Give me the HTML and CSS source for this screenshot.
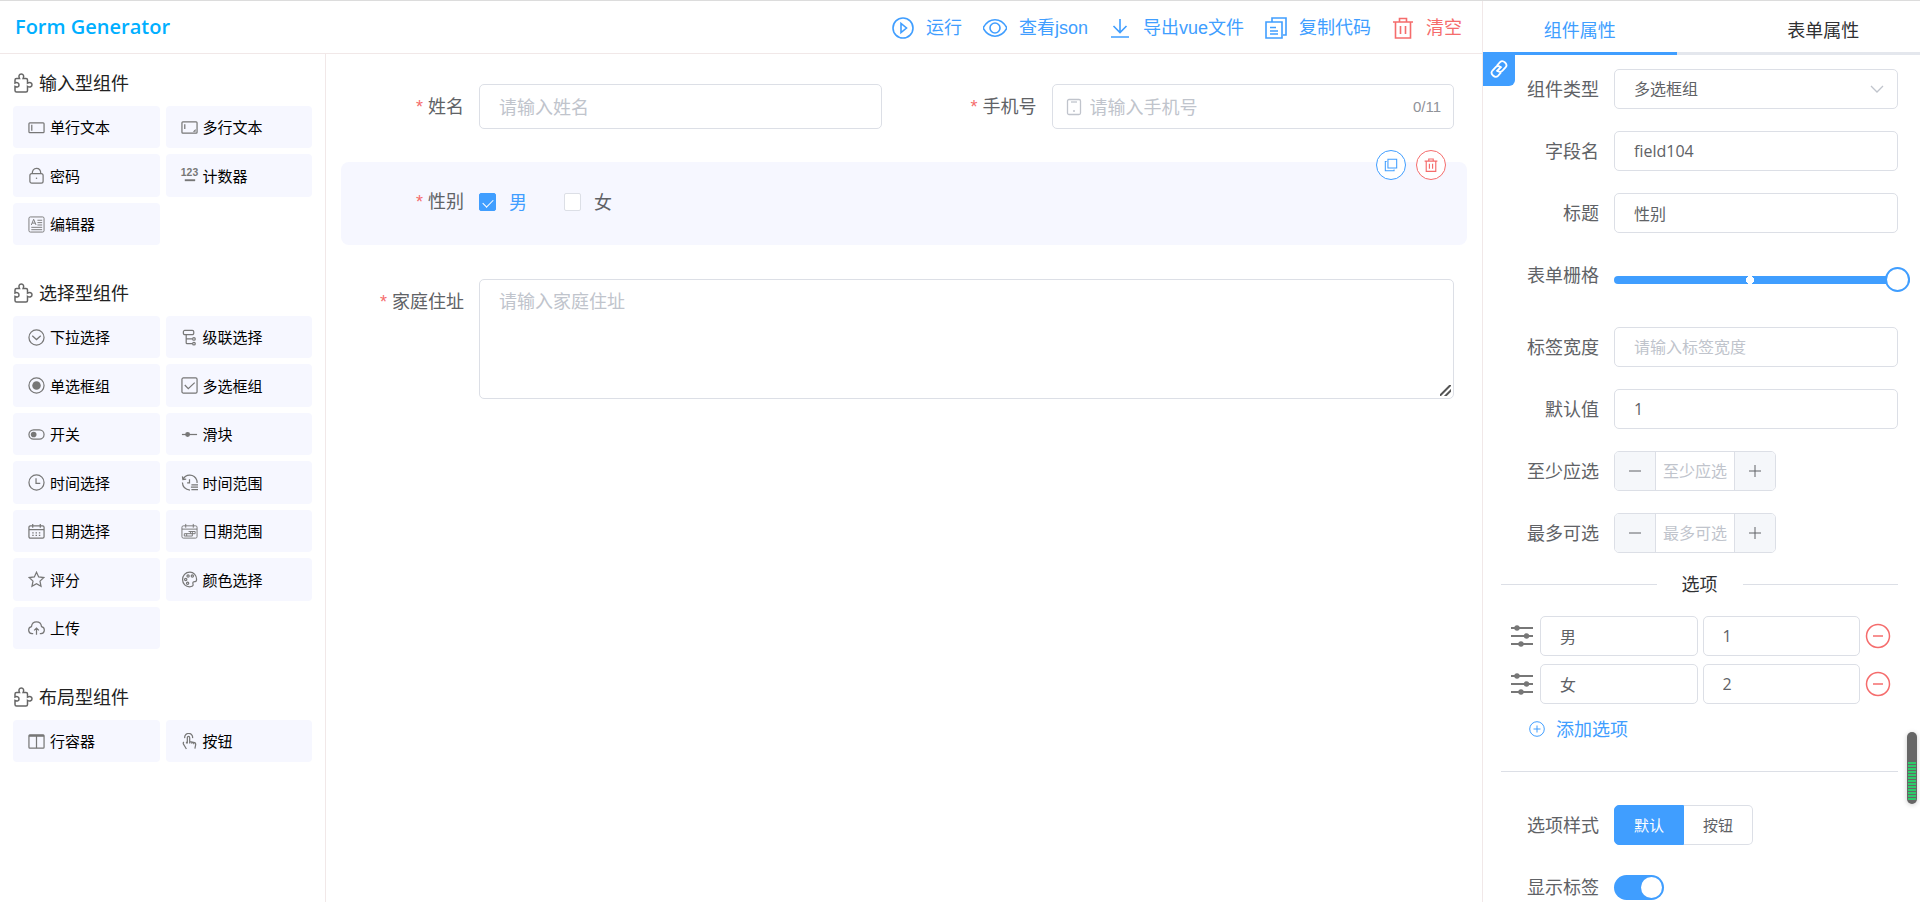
FILE: index.html
```html
<!DOCTYPE html>
<html lang="zh-CN">
<head>
<meta charset="utf-8">
<title>Form Generator</title>
<link rel="stylesheet" href="styles.css">
</head>
<body>
<svg class="sprite" aria-hidden="true">
  <symbol id="puzzle" viewBox="0 0 20 20"><path d="M4 5.500h2.500C5.200 3 6.300 1 8.300 1s3.100 2 1.800 4.500H13A1.500 1.500 0 0 1 14.500 7v3.200c2.500-1.300 4.500-.4 4.500 1.500s-2 2.900-4.500 1.600v4.200a1.500 1.500 0 0 1-1.500 1.500H3.500A1.500 1.500 0 0 1 2 17.500v-4c2.200 1.200 4 .3 4-1.600S4.200 9 2 10V7a1.500 1.500 0 0 1 1.500-1.500z"/></symbol>
  <symbol id="input" viewBox="0 0 18 18"><rect x="1" y="4" width="16" height="10.500" rx="1"/><path d="M4 6v6.500"/></symbol>
  <symbol id="textarea" viewBox="0 0 18 18"><rect x="1" y="3" width="16" height="12" rx="1"/><path d="M4 5.500v5"/><path class="solid" d="M15.500 10.500v3h-3z"/></symbol>
  <symbol id="lock" viewBox="0 0 18 18"><rect x="2" y="7" width="14" height="10" rx="2"/><path d="M4.500 7C4.500 3.500 6 1.500 9 1.500s4.500 2 4.500 5.500"/><circle class="solid" cx="9" cy="12" r=".8"/></symbol>
  <symbol id="editor" viewBox="0 0 18 18"><rect x="1" y="1" width="16" height="16" rx="1.500"/><path d="M3.500 9.500 6 3.500l2.500 6M4.500 7.500h3M10 4.500h5M10 7h5M10 9.500h5M3.500 12h11.500M3.500 14.500h11.500"/></symbol>
  <symbol id="select" viewBox="0 0 18 18"><circle cx="9" cy="9" r="8"/><path d="m4.500 7.200 4.500 4 4.500-4"/></symbol>
  <symbol id="cascade" viewBox="0 0 18 18"><rect x="2.500" y="1.500" width="11" height="4.500" rx="1.500"/><path d="M5.500 6v8.500a1 1 0 0 0 1 1H12M5.500 10.500H12"/><circle cx="13.700" cy="10.500" r="1.400"/><circle cx="13.700" cy="15.500" r="1.400"/></symbol>
  <symbol id="radio" viewBox="0 0 18 18"><circle cx="9" cy="9" r="8"/><circle class="solid" cx="9" cy="9" r="4.500"/></symbol>
  <symbol id="checkbox" viewBox="0 0 18 18"><rect x="1" y="1" width="16" height="16" rx="1.500"/><path d="m4 8.500 3.700 3.800L14.500 6"/></symbol>
  <symbol id="switch" viewBox="0 0 18 18"><rect x="1" y="4" width="16" height="10" rx="5"/><circle class="solid" cx="6" cy="9" r="3"/></symbol>
  <symbol id="slider" viewBox="0 0 18 18"><path d="M1 9h16"/><circle class="solid" cx="7" cy="9" r="2.600"/></symbol>
  <symbol id="time" viewBox="0 0 18 18"><circle cx="9" cy="9" r="8"/><path d="M8.500 4.500V10H13"/></symbol>
  <symbol id="timerange" viewBox="0 0 18 18"><path d="M1.500 2.500 2 6l3.500-.5M2.200 5.800C5-.5 14-.2 16.700 6.500c.3 1 .4 2 .3 3M1.500 9c.2 4.200 3.200 7.500 8 8M9 5.500V9.500H6.500M11 11.500h7M10.500 14h7.500M11 16.500h7"/></symbol>
  <symbol id="date" viewBox="0 0 18 18"><rect x="1" y="3" width="16" height="13" rx="1.500"/><path d="M1 7h16M5 1v4M13 1v4"/><path stroke-dasharray="1.500 2" d="M4.500 10.500h10M4.500 13h10"/></symbol>
  <symbol id="daterange" viewBox="0 0 18 18"><rect x="1" y="3" width="16" height="13" rx="1.500"/><path d="M1 6.500h16M5 1v4M13 1v4M8 9h7v2.300H3.500v2.500H12V9M10 9v2.300M6 11.300v2.500"/></symbol>
  <symbol id="rate" viewBox="0 0 18 18"><path d="m9 1.300 2.300 5 5.400.6-4 3.800 1.100 5.500L9 13.500l-4.800 2.700 1.100-5.500-4-3.800 5.400-.6z"/></symbol>
  <symbol id="color" viewBox="0 0 18 18"><path d="M9.500 1.200C4.500 1.200 1.700 5 1.700 9.200c0 4.500 3.500 7.500 7.300 7.500 2.800 0 4.500-1 3.700-3-.8-2 .8-2.700 2.300-2.500 1.500 0 1.500-1 1.500-2.500-.2-4.300-3.200-7.500-7-7.500z"/><circle cx="5" cy="9" r="1.200"/><circle cx="7.500" cy="5.200" r="1.200"/><circle cx="12" cy="5.200" r="1.200"/><circle cx="7" cy="13" r="1.200"/></symbol>
  <symbol id="upload" viewBox="0 0 18 18"><path d="M5.500 14.500H4.200A3.800 3.800 0 0 1 3.700 7C4 4 6 2 9 2s5 2 5.300 5a3.800 3.800 0 0 1-.5 7.500h-1.300M9 15.500V9M6.500 11 9 8.500l2.500 2.500"/></symbol>
  <symbol id="row" viewBox="0 0 18 18"><rect x="1" y="2" width="16" height="14" rx="1"/><path d="M9 3v13"/><path class="thick" d="M1 3h16"/></symbol>
  <symbol id="button" viewBox="0 0 18 18"><path d="M4 5.500a4.200 4.200 0 1 1 8.200 0M6.700 11V5c0-2 2.500-2 2.500 0v4l5.300 1.200c1 .3 1.200 1 1 2.300l-.8 4M6.700 8.700 5.500 11M3 9.500c-1 1-.8 2 .2 3.200l2.500 4.200M9.200 9v2.200M11.500 9.500v2M13.500 10v2"/></symbol>
  <symbol id="play" viewBox="0 0 22 22"><circle cx="11" cy="11" r="10"/><path d="M9 6.500v9l5.500-4.500z"/></symbol>
  <symbol id="eye" viewBox="0 0 24 22"><path d="M0 11c6-11 18-11 24 0-6 11-18 11-24 0z"/><circle cx="12" cy="11" r="5"/></symbol>
  <symbol id="download" viewBox="0 0 22 22"><path d="M11 2V15M4.500 9l6.500 6.500L17.500 9M2 20h18"/></symbol>
  <symbol id="copydoc" viewBox="0 0 22 22"><path d="M7 5V1h14v17h-3M1 5h16v16H1zM5 10.500h6M5 14h8M5 17h8"/></symbol>
  <symbol id="trash" viewBox="0 0 22 22"><path d="M1 5h20M3.500 5v16h15V5M7.500 5V1.500h7V5M8.500 9v8M13.500 9v8"/></symbol>
  <symbol id="copy" viewBox="0 0 16 16"><path d="M4.500 1.500h10v10h-10zM3 4H1.500v10.500h10V13"/></symbol>
  <symbol id="phone" viewBox="0 0 16 18"><rect x="1.500" y="1.500" width="13" height="15" rx="1.500"/><path d="M5 4h6"/><circle class="solid" cx="8" cy="13" r="1"/></symbol>
  <symbol id="link" viewBox="0 0 20 20"><path d="m8 6.500 3-3.300c3-3 8.500 2 5.500 5.300l-3.200 3.300c-1.500 1.500-3.300 1.200-4.500 0M12 13.500l-3 3.300c-3 3-8.500-2-5.500-5.300l3.200-3.300c1.500-1.500 3.300-1.200 4.500 0M7.500 12.500l5-5"/></symbol>
  <symbol id="down" viewBox="0 0 14 14"><path d="m1 4 6 6 6-6"/></symbol>
  <symbol id="minus" viewBox="0 0 14 14"><path d="M1 7h12"/></symbol>
  <symbol id="plus" viewBox="0 0 14 14"><path d="M1 7h12M7 1v12"/></symbol>
  <symbol id="sliders" viewBox="0 0 22 22"><path class="thick" d="M0 3h22M0 11h22M0 19h22"/><circle class="solid" cx="6" cy="3" r="2.700"/><circle class="solid" cx="15.500" cy="11" r="2.700"/><circle class="solid" cx="10" cy="19" r="2.700"/></symbol>
  <symbol id="remove" viewBox="0 0 26 26"><circle cx="13" cy="13" r="11.500"/><path d="M8 13h10"/></symbol>
  <symbol id="add" viewBox="0 0 16 16"><circle cx="8" cy="8" r="7.300"/><path d="M4.500 8h7M8 4.500v7"/></symbol>
</svg>
<div class="app">
  <aside class="sidebar">
    <header class="bar"><h1 class="logo">Form Generator</h1></header>
    <div class="palette">
      <section class="group">
        <h2 class="group-title"><svg class="icon"><use href="#puzzle"/></svg>输入型组件</h2>
        <div class="group-list">
          <button class="comp"><svg class="icon"><use href="#input"/></svg>单行文本</button>
          <button class="comp"><svg class="icon"><use href="#textarea"/></svg>多行文本</button>
          <button class="comp"><svg class="icon"><use href="#lock"/></svg>密码</button>
          <button class="comp"><svg class="icon" viewBox="0 0 18 18"><text class="digits" x="9" y="9" text-anchor="middle">123</text><path class="thick" d="M4 14h11"/></svg>计数器</button>
          <button class="comp"><svg class="icon light"><use href="#editor"/></svg>编辑器</button>
        </div>
      </section>
      <section class="group">
        <h2 class="group-title"><svg class="icon"><use href="#puzzle"/></svg>选择型组件</h2>
        <div class="group-list">
          <button class="comp"><svg class="icon"><use href="#select"/></svg>下拉选择</button>
          <button class="comp"><svg class="icon"><use href="#cascade"/></svg>级联选择</button>
          <button class="comp"><svg class="icon"><use href="#radio"/></svg>单选框组</button>
          <button class="comp"><svg class="icon"><use href="#checkbox"/></svg>多选框组</button>
          <button class="comp"><svg class="icon"><use href="#switch"/></svg>开关</button>
          <button class="comp"><svg class="icon"><use href="#slider"/></svg>滑块</button>
          <button class="comp"><svg class="icon"><use href="#time"/></svg>时间选择</button>
          <button class="comp"><svg class="icon"><use href="#timerange"/></svg>时间范围</button>
          <button class="comp"><svg class="icon"><use href="#date"/></svg>日期选择</button>
          <button class="comp"><svg class="icon light"><use href="#daterange"/></svg>日期范围</button>
          <button class="comp"><svg class="icon"><use href="#rate"/></svg>评分</button>
          <button class="comp"><svg class="icon"><use href="#color"/></svg>颜色选择</button>
          <button class="comp"><svg class="icon"><use href="#upload"/></svg>上传</button>
        </div>
      </section>
      <section class="group">
        <h2 class="group-title"><svg class="icon"><use href="#puzzle"/></svg>布局型组件</h2>
        <div class="group-list">
          <button class="comp"><svg class="icon"><use href="#row"/></svg>行容器</button>
          <button class="comp"><svg class="icon"><use href="#button"/></svg>按钮</button>
        </div>
      </section>
    </div>
  </aside>

  <main class="board">
    <header class="bar toolbar">
      <button class="tool"><svg class="icon"><use href="#play"/></svg>运行</button>
      <button class="tool"><svg class="icon wide"><use href="#eye"/></svg>查看json</button>
      <button class="tool"><svg class="icon"><use href="#download"/></svg>导出vue文件</button>
      <button class="tool"><svg class="icon"><use href="#copydoc"/></svg>复制代码</button>
      <button class="tool danger"><svg class="icon"><use href="#trash"/></svg>清空</button>
    </header>
    <form class="canvas">
      <div class="field">
        <label class="field-label" for="name">姓名</label>
        <input class="control large" id="name" placeholder="请输入姓名">
      </div>
      <div class="field">
        <label class="field-label" for="mobile">手机号</label>
        <div class="control large affix">
          <svg class="icon"><use href="#phone"/></svg>
          <input class="bare" id="mobile" placeholder="请输入手机号">
          <span class="count">0/11</span>
        </div>
      </div>
      <div class="field full selected" role="group" aria-labelledby="gender">
        <span class="field-label" id="gender">性别</span>
        <div class="checks">
          <label class="check"><input type="checkbox" checked><span>男</span></label>
          <label class="check"><input type="checkbox"><span>女</span></label>
        </div>
        <div class="actions">
          <button class="round" type="button" aria-label="复制"><svg class="icon"><use href="#copy"/></svg></button>
          <button class="round danger" type="button" aria-label="删除"><svg class="icon"><use href="#trash"/></svg></button>
        </div>
      </div>
      <div class="field full">
        <label class="field-label" for="address">家庭住址</label>
        <textarea class="control large area" id="address" placeholder="请输入家庭住址"></textarea>
      </div>
    </form>
  </main>

  <aside class="panel">
    <nav class="tabs">
      <button class="tab active"><span>组件属性</span></button>
      <button class="tab"><span>表单属性</span></button>
    </nav>
    <a class="doc-link" href="#" aria-label="组件文档"><svg class="icon"><use href="#link"/></svg></a>
    <form class="props">
      <div class="prop"><label for="type">组件类型</label>
        <div class="picker"><select class="control" id="type"><option>多选框组</option></select><svg class="icon"><use href="#down"/></svg></div></div>
      <div class="prop"><label for="fieldname">字段名</label><input class="control" id="fieldname" value="field104"></div>
      <div class="prop"><label for="title">标题</label><input class="control" id="title" value="性别"></div>
      <div class="prop grid-prop"><label for="span">表单栅格</label><input class="range" type="range" id="span" min="1" max="24" value="24"></div>
      <div class="prop"><label for="labelwidth">标签宽度</label><input class="control" id="labelwidth" placeholder="请输入标签宽度"></div>
      <div class="prop"><label for="default">默认值</label><input class="control" id="default" value="1"></div>
      <div class="prop"><label for="min">至少应选</label>
        <div class="stepper"><button type="button" aria-label="减少"><svg class="icon"><use href="#minus"/></svg></button><input id="min" placeholder="至少应选"><button type="button" aria-label="增加"><svg class="icon"><use href="#plus"/></svg></button></div></div>
      <div class="prop"><label for="max">最多可选</label>
        <div class="stepper"><button type="button" aria-label="减少"><svg class="icon"><use href="#minus"/></svg></button><input id="max" placeholder="最多可选"><button type="button" aria-label="增加"><svg class="icon"><use href="#plus"/></svg></button></div></div>
      <div class="divider"><span>选项</span></div>
      <div class="options">
        <div class="option"><svg class="icon drag"><use href="#sliders"/></svg><input class="control" aria-label="选项名" value="男"><input class="control" aria-label="选项值" value="1"><button class="remove" type="button" aria-label="删除选项"><svg class="icon"><use href="#remove"/></svg></button></div>
        <div class="option"><svg class="icon drag"><use href="#sliders"/></svg><input class="control" aria-label="选项名" value="女"><input class="control" aria-label="选项值" value="2"><button class="remove" type="button" aria-label="删除选项"><svg class="icon"><use href="#remove"/></svg></button></div>
      </div>
      <button class="add" type="button"><svg class="icon"><use href="#add"/></svg>添加选项</button>
      <hr class="rule">
      <div class="prop" role="group" aria-labelledby="optstyle"><span class="prop-name" id="optstyle">选项样式</span>
        <div class="segmented"><label><input type="radio" name="style" checked><span>默认</span></label><label><input type="radio" name="style"><span>按钮</span></label></div></div>
      <div class="prop"><label for="showlabel">显示标签</label><input class="toggle" type="checkbox" id="showlabel" checked></div>
    </form>
    <div class="meter"></div>
  </aside>
</div>
</body>
</html>
```
FILE: styles.css
```css
* { box-sizing: border-box; }
body {
  margin: 0;
  font-family: "Open Sans", "Noto Sans", "Noto Sans CJK SC", sans-serif;
  font-size: 18px;
  line-height: 26px;
  color: #606266;
  background: #fff;
}
button, input, select, textarea { font: inherit; color: inherit; margin: 0; }
button { border: 0; padding: 0; background: none; cursor: pointer; }
::placeholder { color: #c0c4cc; opacity: 1; }
.sprite { position: absolute; width: 0; height: 0; }
.icon { flex: none; fill: none; stroke: currentColor; stroke-width: 1.3; overflow: visible; }
.icon.light { stroke-width: 1; }
.solid { fill: currentColor; stroke: none; }
.thick { stroke-width: 2; }
.digits { font: 700 11px "Liberation Sans", sans-serif; fill: currentColor; stroke: none; }

.app {
  display: grid;
  grid-template-columns: 326px minmax(0, 1fr) 438px;
  height: 100vh;
  border-top: 1px solid #dcdcdc;
  overflow: hidden;
}
.bar {
  display: flex;
  align-items: center;
  height: 53px;
  border-bottom: 1px solid #f1e8e8;
}

/* component palette */
.logo { margin: 0; padding-left: 15px; font-size: 20px; font-weight: 600; color: #00afff; }
.palette { height: 100%; padding: 16px 13px; border-right: 1px solid #f1e8e8; }
.group { margin-bottom: 35px; }
.group-title {
  display: flex;
  align-items: center;
  gap: 6px;
  margin: 0 0 10px;
  font-size: 18px;
  font-weight: 400;
  color: #222;
}
.group-title .icon { width: 20px; height: 20px; color: #666; stroke-width: 1.5; }
.group-list {
  display: grid;
  grid-template-columns: 1fr 1fr;
  grid-auto-rows: 42px 43px;
  gap: 6px;
}
.comp {
  display: flex;
  align-items: center;
  gap: 5px;
  padding: 0 15px;
  border-radius: 4px;
  background: #f6f7ff;
  font-size: 15px;
  color: #000;
}
.comp .icon { width: 17px; height: 17px; color: #777; }

/* centre board */
.toolbar { justify-content: flex-end; gap: 21px; padding: 2px 20px 0 0; }
.tool {
  display: flex;
  align-items: center;
  gap: 12px;
  font-family: "Liberation Sans", "Noto Sans CJK SC", sans-serif;
  color: #409eff;
}
.tool .icon { width: 22px; height: 22px; stroke-width: 1.6; }
.tool .wide { width: 24px; }
.danger { color: #f56c6c; }
.canvas {
  display: grid;
  grid-template-columns: 1fr 1fr;
  gap: 12px 19px;
  padding: 13px 15px;
}
.field {
  position: relative;
  display: flex;
  align-items: flex-start;
  padding: 17px 13px 21px 0;
  border-radius: 8px;
}
.full { grid-column: 1 / -1; }
.selected { background: #f6f7ff; margin-bottom: 5px; }
.field-label {
  flex: none;
  width: 138px;
  padding-right: 15px;
  line-height: 45px;
  text-align: right;
}
.field-label::before {
  content: "*";
  margin-right: 5px;
  font-family: "Liberation Sans", sans-serif;
  line-height: 1;
  color: #f56c6c;
}
.control {
  width: 100%;
  min-width: 0;
  height: 40px;
  padding: 0 19px;
  border: 1px solid #dcdfe6;
  border-radius: 5px;
  background: #fff;
  font-size: 16px;
  outline: none;
}
.large { height: 45px; font-size: 18px; }
.affix { display: flex; align-items: center; padding: 0 12px 0 13px; }
.affix .icon { width: 16px; height: 18px; margin-right: 8px; color: #c0c4cc; }
.bare { flex: 1; min-width: 0; padding: 0; border: 0; outline: none; background: none; }
.count { font-family: "Liberation Sans", sans-serif; font-size: 15px; color: #909399; }
.area { height: 120px; padding: 8px 19px; line-height: 26px; resize: vertical; }
.area::-webkit-resizer {
  background: linear-gradient(135deg, #fff 6px, #555 7px 8px, #fff 9px 10px, #555 11px 12px, #fff 13px) 2px 2px / 11px 11px no-repeat;
}
.checks { display: flex; gap: 37px; height: 45px; }
.check { display: flex; align-items: center; gap: 13px; }
.check input {
  appearance: none;
  width: 17px;
  height: 18px;
  border: 1px solid #dcdfe6;
  border-radius: 2px;
  background: #fff;
}
.check input:checked { display: grid; place-items: center; border-color: #409eff; background: #409eff; }
.check input:checked::after {
  content: "";
  width: 5px;
  height: 9px;
  border: solid #fff;
  border-width: 0 1px 1px 0;
  transform: rotate(45deg);
}
.check input:checked + span { color: #409eff; }
.actions { position: absolute; top: -12px; right: 21px; display: flex; gap: 10px; }
.round {
  display: grid;
  place-items: center;
  width: 30px;
  height: 30px;
  border: 1px solid currentColor;
  border-radius: 50%;
  background: #fff;
  color: #409eff;
}
.round.danger { color: #f56c6c; }
.round .icon { width: 14px; height: 14px; stroke-width: 1.2; }
.round.danger .icon { stroke-width: 1.8; }

/* property panel */
.panel { position: relative; border-left: 1px solid #f1e8e8; }
.tabs { display: flex; height: 54px; border-bottom: 3px solid #e4e7ed; }
.tab { flex: 1; height: 54px; color: #303133; }
.tab span { display: grid; place-items: center; height: 54px; padding-top: 6px; border-bottom: 3px solid transparent; }
.tab:first-child { padding-right: 25px; }
.tab:last-child { padding-left: 25px; }
.tab.active { color: #409eff; }
.tab.active span { border-bottom-color: #409eff; }
.doc-link {
  position: absolute;
  top: 51px;
  left: 0;
  display: grid;
  place-items: center;
  width: 32px;
  height: 34px;
  border-radius: 0 0 6px 0;
  background: #409eff;
  color: #fff;
}
.doc-link .icon { width: 20px; height: 20px; stroke-width: 1.8; }
.props { padding: 14px 22px 0 18px; }
.prop { display: flex; align-items: center; min-height: 40px; margin-bottom: 22px; }
.prop > label, .prop-name { flex: none; width: 113px; padding-right: 15px; line-height: 40px; text-align: right; }
.grid-prop { align-items: flex-start; height: 50px; }
.picker { position: relative; flex: 1; }
.picker select { display: block; appearance: none; }
.picker .icon { position: absolute; top: 13px; right: 14px; width: 14px; height: 14px; color: #c0c4cc; pointer-events: none; }
.range { flex: 1; min-width: 0; height: 50px; margin-right: -12px; appearance: none; background: none; }
.range::-webkit-slider-runnable-track {
  height: 8px;
  border-radius: 4px;
  background: radial-gradient(circle at 46% 50%, #fff 4px, #409eff 4px);
}
.range::-webkit-slider-thumb {
  appearance: none;
  width: 25px;
  height: 25px;
  margin-top: -9px;
  border: 2px solid #409eff;
  border-radius: 50%;
  background: #fff;
}
.stepper {
  display: flex;
  width: 162px;
  height: 40px;
  border: 1px solid #dcdfe6;
  border-radius: 5px;
  overflow: hidden;
}
.stepper button { display: grid; place-items: center; width: 40px; background: #f5f7fa; }
.stepper .icon { width: 14px; height: 14px; stroke-width: 1; }
.stepper input {
  flex: 1;
  min-width: 0;
  padding: 0;
  border: solid #dcdfe6;
  border-width: 0 1px;
  font-size: 16px;
  text-align: center;
  outline: none;
}
.divider { display: flex; align-items: center; gap: 24px; margin: -4px 0 19px; color: #303133; }
.divider::before, .divider::after { content: ""; flex: 1; height: 1px; background: #dcdfe6; }
.divider span { padding: 0 1px; }
.options { display: grid; gap: 8px; padding: 0 7px 0 10px; }
.option { display: flex; align-items: center; gap: 5px; }
.drag { width: 22px; height: 22px; margin-right: 2px; color: #777; }
.remove { flex: none; display: grid; color: #f56c6c; }
.remove .icon { width: 26px; height: 26px; stroke-width: 1.5; }
.add { display: flex; align-items: center; gap: 11px; margin: 12px 0 0 28px; color: #409eff; }
.add .icon { width: 16px; height: 16px; stroke-width: 1; }
.rule { height: 1px; margin: 29px 0 33px; border: 0; background: #dcdfe6; }
.segmented { display: flex; font-size: 15px; }
.segmented label { display: flex; }
.segmented input { position: absolute; opacity: 0; }
.segmented span {
  display: block;
  padding: 0 19px;
  border: 1px solid #dcdfe6;
  line-height: 38px;
}
.segmented label:first-child span { border-radius: 5px 0 0 5px; }
.segmented label:last-child span { border-left: 0; border-radius: 0 5px 5px 0; }
.segmented input:checked + span { border-color: #409eff; background: #409eff; color: #fff; }
.toggle {
  appearance: none;
  width: 50px;
  height: 25px;
  padding: 2px;
  border-radius: 13px;
  background: #409eff;
}
.toggle::after { content: ""; display: block; width: 21px; height: 21px; margin-left: auto; border-radius: 50%; background: #fff; }
.meter {
  position: absolute;
  top: 731px;
  right: 3px;
  width: 10px;
  height: 72px;
  padding: 30px 1px 3px;
  border-radius: 5px;
  background: repeating-linear-gradient(#2dcb6a 0 2px, #666 2px 3px) content-box, #666;
  box-shadow: 0 1px 5px #0003;
}
```
